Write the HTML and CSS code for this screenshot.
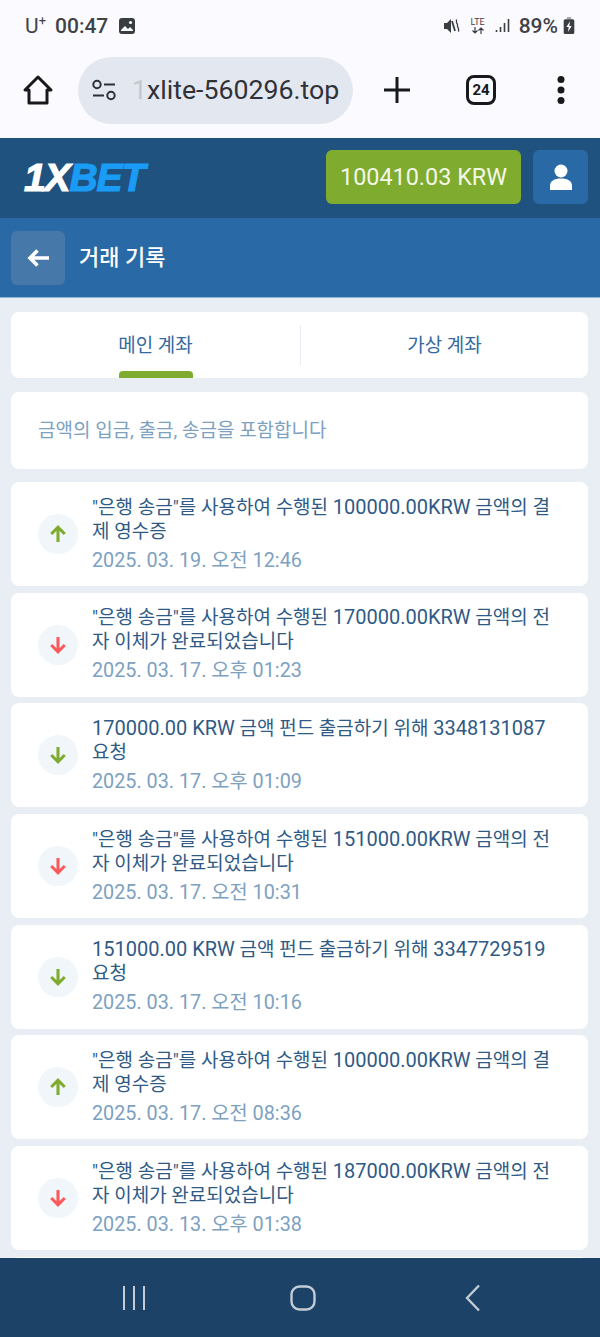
FILE: index.html
```html
<!DOCTYPE html>
<html lang="ko">
<head>
<meta charset="utf-8">
<title>거래 기록</title>
<link rel="stylesheet" href="styles.css">
</head>
<body>
<div class="screen">
  <div class="chrome">
    <div class="status">
      <div class="status-left">
        <span class="carrier">U<sup>+</sup></span>
        <span class="clock">00:47</span>
        <svg class="ic-photo" width="18" height="18" viewBox="0 0 18 18"><rect x="1" y="1" width="16" height="16" rx="3" fill="#3a3d42"/><path d="M3 13l4-4 3 3 2-2 3 3v1H3z" fill="#fbfbff"/><circle cx="12.500" cy="5.500" r="1.600" fill="#fbfbff"/></svg>
      </div>
      <div class="status-right">
        <svg width="18" height="16" viewBox="0 0 18 16"><path d="M1 5h3l4-4v14l-4-4H1z" fill="#3a3d42"/><path d="M9 3l3 10" stroke="#3a3d42" stroke-width="1.800"/><path d="M13 1.500c1.500 1.500-.5 2.500 1 4s-.5 2.500 1 4-.5 2.500 1 4" stroke="#3a3d42" stroke-width="1.300" fill="none"/></svg>
        <span class="lte">LTE<svg width="16" height="7" viewBox="0 0 16 7"><path d="M5 0v6M2.500 3.500L5 6l2.500-2.500M11 7V1M8.500 3.500L11 1l2.500 2.500" stroke="#3a3d42" stroke-width="1.200" fill="none"/></svg></span>
        <svg width="15" height="15" viewBox="0 0 15 15"><path d="M1.500 12v2M5.500 9v5M9.500 5v9M13.500 1v13" stroke="#3a3d42" stroke-width="1.600"/></svg>
        <span class="battery-pct">89%</span>
        <svg width="12" height="17" viewBox="0 0 11 16"><path d="M3.500 0h4v2h-4z" fill="#a8aaae"/><rect x="0.500" y="2" width="10" height="14" rx="1.500" fill="#3a3d42"/><path d="M6.500 4L3 9.500h2.200L4.500 14 8 8.500H5.800z" fill="#fbfbff"/></svg>
      </div>
    </div>
    <div class="toolbar">
      <svg class="home" width="32" height="32" viewBox="0 0 32 32"><path d="M16 3L3 16h4v13h18V16h4z" fill="none" stroke="#17191c" stroke-width="3" stroke-linejoin="round"/></svg>
      <div class="url">
        <svg width="26" height="22" viewBox="0 0 26 22"><circle cx="6" cy="5.500" r="3.700" fill="none" stroke="#2d3036" stroke-width="2"/><path d="M13 5.500h11M2 16.500h11" stroke="#2d3036" stroke-width="2.200"/><circle cx="20" cy="16.500" r="3.700" fill="none" stroke="#2d3036" stroke-width="2"/></svg>
        <span class="url-text"><span class="url-faded">1</span>xlite-560296.top</span>
      </div>
      <svg class="plus" width="30" height="30" viewBox="0 0 30 30"><path d="M15 2v26M2 15h26" stroke="#17191c" stroke-width="3"/></svg>
      <span class="tabs-count">24</span>
      <svg class="more" width="10" height="30" viewBox="0 0 10 30"><circle cx="5" cy="4.500" r="3.500" fill="#17191c"/><circle cx="5" cy="15" r="3.500" fill="#17191c"/><circle cx="5" cy="25.500" r="3.500" fill="#17191c"/></svg>
    </div>
  </div>

  <header class="topbar">
    <div class="logo"><span class="logo-w">1X</span><span class="logo-b">BET</span></div>
    <div class="top-actions">
      <div class="balance">100410.03 KRW</div>
      <div class="user">
        <svg width="24" height="26" viewBox="0 0 24 26"><ellipse cx="12" cy="7" rx="6.500" ry="6.500" fill="#fff"/><path d="M1 26v-4c0-5 4-7.500 11-7.500S23 17 23 22v4z" fill="#fff"/></svg>
      </div>
    </div>
  </header>

  <div class="subbar">
    <div class="back">
      <svg width="24" height="20" viewBox="0 0 24 20"><path d="M23 10H4M11.500 2.500L4 10l7.500 7.500" fill="none" stroke="#fff" stroke-width="3.600"/></svg>
    </div>
    <h1 class="title">거래 기록</h1>
  </div>

  <main class="content">
    <div class="card tabs">
      <div class="tab active"><span class="tab-label">메인 계좌</span></div>
      <div class="tab"><span class="tab-label">가상 계좌</span></div>
    </div>
    <div class="card info"><span class="info-text">금액의 입금, 출금, 송금을 포함합니다</span></div>
    <div class="list">
      <div class="card item">
        <span class="badge up"><svg width="20" height="20" viewBox="0 0 20 20"><use href="#up"/></svg></span>
        <div class="item-body"><p class="item-title">"은행 송금"를 사용하여 수행된 <span class="num">100000.00KRW</span> 금액의 결제 영수증</p><p class="item-date">2025. 03. 19. 오전 12:46</p></div>
      </div>
      <div class="card item">
        <span class="badge red"><svg width="20" height="20" viewBox="0 0 20 20"><use href="#down"/></svg></span>
        <div class="item-body"><p class="item-title">"은행 송금"를 사용하여 수행된 <span class="num">170000.00KRW</span> 금액의 전자 이체가 완료되었습니다</p><p class="item-date">2025. 03. 17. 오후 01:23</p></div>
      </div>
      <div class="card item">
        <span class="badge up"><svg width="20" height="20" viewBox="0 0 20 20"><use href="#down"/></svg></span>
        <div class="item-body"><p class="item-title"><span class="num">170000.00 KRW</span> 금액 펀드 출금하기 위해 <span class="num">3348131087</span> 요청</p><p class="item-date">2025. 03. 17. 오후 01:09</p></div>
      </div>
      <div class="card item">
        <span class="badge red"><svg width="20" height="20" viewBox="0 0 20 20"><use href="#down"/></svg></span>
        <div class="item-body"><p class="item-title">"은행 송금"를 사용하여 수행된 <span class="num">151000.00KRW</span> 금액의 전자 이체가 완료되었습니다</p><p class="item-date">2025. 03. 17. 오전 10:31</p></div>
      </div>
      <div class="card item">
        <span class="badge up"><svg width="20" height="20" viewBox="0 0 20 20"><use href="#down"/></svg></span>
        <div class="item-body"><p class="item-title"><span class="num">151000.00 KRW</span> 금액 펀드 출금하기 위해 <span class="num">3347729519</span> 요청</p><p class="item-date">2025. 03. 17. 오전 10:16</p></div>
      </div>
      <div class="card item">
        <span class="badge up"><svg width="20" height="20" viewBox="0 0 20 20"><use href="#up"/></svg></span>
        <div class="item-body"><p class="item-title">"은행 송금"를 사용하여 수행된 <span class="num">100000.00KRW</span> 금액의 결제 영수증</p><p class="item-date">2025. 03. 17. 오전 08:36</p></div>
      </div>
      <div class="card item">
        <span class="badge red"><svg width="20" height="20" viewBox="0 0 20 20"><use href="#down"/></svg></span>
        <div class="item-body"><p class="item-title">"은행 송금"를 사용하여 수행된 <span class="num">187000.00KRW</span> 금액의 전자 이체가 완료되었습니다</p><p class="item-date">2025. 03. 13. 오후 01:38</p></div>
      </div>
      <div class="card item"></div>
    </div>
  </main>

  <nav class="sysnav">
    <svg width="26" height="26" viewBox="0 0 26 26"><path d="M3 1v24M13 1v24M23 1v24" stroke="#c3ccd6" stroke-width="2"/></svg>
    <svg class="nav-home" width="26" height="26" viewBox="0 0 26 26"><rect x="1.500" y="1.500" width="23" height="23" rx="8" fill="none" stroke="#c3ccd6" stroke-width="2.400"/></svg>
    <svg class="nav-back" width="16" height="28" viewBox="0 0 16 28"><path d="M14 1.500L2 14l12 12.500" fill="none" stroke="#c3ccd6" stroke-width="2.400"/></svg>
  </nav>

  <svg class="defs" width="0" height="0">
    <defs>
      <path id="up" d="M10 19V3M2.500 10L10 2.500 17.500 10" fill="none" stroke="currentColor" stroke-width="3.400"/>
      <path id="down" d="M10 1v16M2.500 10L10 17.500 17.500 10" fill="none" stroke="currentColor" stroke-width="3.400"/>
    </defs>
  </svg>
</div>
</body>
</html>
```

FILE: styles.css
```css
* { box-sizing: border-box; }
html, body { margin: 0; padding: 0; }
body { font-family: Roboto, "Noto Sans CJK KR", sans-serif; background: #e8eef3; }
p, h1 { margin: 0; }

.screen { width: 600px; height: 1337px; display: flex; flex-direction: column; overflow: hidden; }

.chrome { height: 138px; background: #fbfbff; flex: none; }
.status { height: 50px; padding: 1px 25px 0 25px; display: flex; justify-content: space-between; align-items: center; color: #3f4247; }
.status-left { display: flex; align-items: center; gap: 9px; font-size: 21px; }
.clock { font-weight: 500; }
.carrier sup { font-size: 13px; line-height: 0; }
.ic-photo { margin-left: 1px; }
.status-right { display: flex; align-items: center; gap: 8px; font-size: 21px; }
.lte { display: flex; flex-direction: column; align-items: center; font-size: 9px; line-height: 9px; width: 18px; }
.battery-pct { margin: 0 -3px 0 1px; font-weight: 500; }

.toolbar { height: 88px; padding: 6px 0 0 22px; display: flex; align-items: center; }
.url { width: 275px; height: 67px; margin: -14px 0 0 24px; border-radius: 34px; background: #e3e7f0; display: flex; align-items: center; padding-left: 13px; gap: 15px; }
.home { margin-top: -14px; }
.url-text { font-size: 26.700px; color: #2f3237; white-space: nowrap; }
.url-faded { color: #c4c7ce; }
.plus { margin: -14px 0 0 29px; }
.tabs-count { width: 30px; height: 30px; margin: -14px 0 0 54px; border: 3px solid #17191c; border-radius: 8px; font-size: 15px; font-weight: 700; color: #17191c; display: flex; align-items: center; justify-content: center; }
.more { margin: -14px 0 0 60px; }

.topbar { height: 80px; flex: none; background: #20527f; padding: 12px 12px 14px 24px; display: flex; align-items: center; justify-content: space-between; }
.logo { font-family: "Liberation Sans", sans-serif; font-size: 39px; font-weight: 700; font-style: italic; letter-spacing: -1.100px; -webkit-text-stroke: 1.200px; line-height: 1; }
.logo-w { color: #fff; }
.logo-b { color: #1a9bf5; }
.top-actions { display: flex; gap: 12px; }
.balance { width: 195px; height: 54px; border-radius: 6px; background: #7fab2e; color: #f3f7e8; font-size: 23.400px; display: flex; align-items: center; justify-content: center; }
.user { width: 55px; height: 54px; border-radius: 6px; background: #2969a5; display: flex; align-items: center; justify-content: center; }

.subbar { height: 80px; flex: none; background: #2969a5; padding: 0 11px; display: flex; align-items: center; gap: 14px; border-bottom: 1px solid #8fb6d8; }
.back { width: 54px; height: 54px; border-radius: 6px; background: #4679aa; display: flex; align-items: center; justify-content: center; }
.title { font-size: 22px; font-weight: 500; color: #fff; padding-bottom: 6px; }

.content { flex: 1; min-height: 0; overflow: hidden; padding: 14px 12px 0 11px; }
.card { background: #fff; border-radius: 8px; }
.tabs { height: 66px; display: flex; align-items: center; overflow: hidden; }
.tab { position: relative; width: 289px; height: 40px; display: flex; align-items: center; justify-content: center; color: #34699d; font-size: 19px; }
.tab + .tab { border-left: 1px solid #e8eef3; flex: 1; }
.tab-label { padding-bottom: 4px; }
.tab.active::after { content: ""; position: absolute; left: 108px; width: 74px; bottom: -13px; height: 7px; border-radius: 4px 4px 0 0; background: #7fab2e; }

.info { height: 77px; margin-top: 14px; padding: 0 27px; display: flex; align-items: center; color: #7da1bf; font-size: 19px; }
.info-text { padding-bottom: 4px; }

.list { display: flex; flex-direction: column; gap: 6.700px; margin-top: 13px; }
.item { height: 104px; display: flex; align-items: center; padding: 0 24px 0 27px; gap: 14px; flex: none; }
.badge { width: 40px; height: 40px; border-radius: 50%; background: #f1f6fb; display: flex; align-items: center; justify-content: center; flex: none; }
.badge svg { width: 18px; height: 18px; }
.badge.up { color: #7fab2e; }
.badge.red { color: #fb5a5a; }
.item-body { min-width: 0; flex: 1; }
.item-title { color: #2f5a85; font-size: 19px; line-height: 24px; word-break: break-all; }
.num { font-size: 20px; line-height: 1; }
.item-date { color: #7da1bf; font-size: 19.800px; line-height: 24px; margin-top: 5px; }

.sysnav { height: 79px; flex: none; background: #1c4267; padding: 0 0 0 121px; display: flex; align-items: center; }
.nav-home { margin-left: 143px; }
.nav-back { margin-left: 149px; }
.defs { position: absolute; }
```
